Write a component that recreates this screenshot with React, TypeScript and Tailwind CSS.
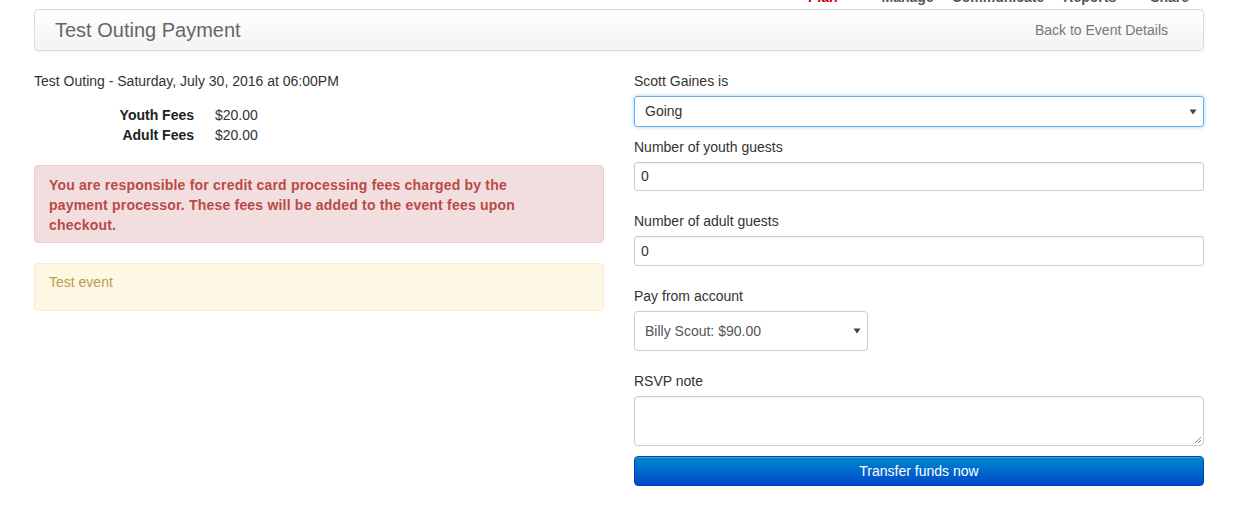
const navItems = [
  { label: "Plan", className: "text-[#cc0000] ml-[808px]" },
  { label: "Manage", className: "text-[#555] ml-[44px]" },
  { label: "Communicate", className: "text-[#555] ml-[18px]" },
  { label: "Reports", className: "text-[#555] ml-[19px]" },
  { label: "Share", className: "text-[#555] ml-[34px]" },
];

const Caret = () => (
  <svg width="8" height="6" viewBox="0 0 8 6" className="absolute right-[6px] top-1/2 -translate-y-1/2">
    <path d="M0.5 0.5 L7.5 0.5 L4 5.5 Z" fill="#444" />
  </svg>
);

const Label: React.FC<{ text: string }> = ({ text }) => (
  <div className="text-[14px] leading-[20px] text-[#333] mb-[5px]">{text}</div>
);

export default function App() {
  return (
    <div className="w-[1242px] h-[505px] bg-white overflow-hidden font-['Liberation_Sans',Arial,sans-serif] text-[#333]">
      {/* clipped top nav */}
      <div className="h-[5px] overflow-hidden">
        <div className="flex -mt-[10px] text-[14px] leading-[14px] font-bold">
          {navItems.map((n) => (
            <span key={n.label} className={n.className}>{n.label}</span>
          ))}
        </div>
      </div>

      <div className="w-[1170px] ml-[34px] pt-[4px]">
        {/* header panel */}
        <div className="h-[42px] border border-[#dcdcdc] rounded-[4px] bg-gradient-to-b from-white to-[#f3f3f3] shadow-[0_1px_2px_rgba(0,0,0,0.06)] flex items-center justify-between pl-[20px] pr-[35px]">
          <h1 className="text-[20px] text-[#666] leading-none">Test Outing Payment</h1>
          <span className="text-[14px] text-[#777]">Back to Event Details</span>
        </div>

        <div className="flex gap-[30px] pt-[20px]">
          {/* left */}
          <div className="w-[570px]">
            <div className="text-[14px] leading-[20px]">Test Outing - Saturday, July 30, 2016 at 06:00PM</div>
            <div className="mt-[14px] grid grid-cols-[160px_auto] gap-x-[21px] text-[14px] leading-[20px] w-fit">
              <span className="font-bold text-right text-[#222]">Youth Fees</span>
              <span>$20.00</span>
              <span className="font-bold text-right text-[#222]">Adult Fees</span>
              <span>$20.00</span>
            </div>
            <div className="mt-[20px] h-[78px] bg-[#f2dede] border border-[#ebccd1] rounded-[4px] pl-[14px] pt-[9px] text-[14px] leading-[20px] font-bold tracking-[0.2px] text-[#b94a48] pr-[60px]">
              You are responsible for credit card processing fees charged by the payment processor. These fees will be added to the event fees upon checkout.
            </div>
            <div className="mt-[20px] h-[48px] bg-[#fcf8e3] border border-[#faebcc] rounded-[4px] px-[14px] pt-[8px] text-[14px] leading-[20px] text-[#c09853]">
              Test event
            </div>
          </div>

          {/* right */}
          <div className="w-[570px] flex flex-col">
            <Label text="Scott Gaines is" />
            <div className="relative h-[31px] border border-[#66afe9] rounded-[3px] shadow-[0_0_4px_rgba(102,175,233,0.6)] flex items-center pl-[10px] text-[14px]">
              Going
              <Caret />
            </div>

            <div className="mt-[10px]"><Label text="Number of youth guests" /></div>
            <div className="h-[29px] border border-[#ccc] rounded-[3px] flex items-center pl-[6px] text-[14px] shadow-[inset_0_1px_1px_rgba(0,0,0,0.06)]">0</div>

            <div className="mt-[20px]"><Label text="Number of adult guests" /></div>
            <div className="h-[30px] border border-[#ccc] rounded-[3px] flex items-center pl-[6px] text-[14px] shadow-[inset_0_1px_1px_rgba(0,0,0,0.06)]">0</div>

            <div className="mt-[20px]"><Label text="Pay from account" /></div>
            <div className="relative w-[234px] h-[40px] border border-[#ccc] rounded-[4px] flex items-center pl-[10px] text-[14px] text-[#555]">
              Billy Scout: $90.00
              <Caret />
            </div>

            <div className="mt-[20px]"><Label text="RSVP note" /></div>
            <div className="relative h-[50px] border border-[#ccc] rounded-[4px] shadow-[inset_0_1px_1px_rgba(0,0,0,0.06)]">
              <svg width="8" height="8" viewBox="0 0 8 8" className="absolute right-[1px] bottom-[1px]">
                <path d="M7 1 L1 7 M7 4 L4 7" stroke="#888" strokeWidth="1" />
              </svg>
            </div>

            <button className="mt-[10px] h-[30px] rounded-[4px] border border-[#0044aa] bg-gradient-to-b from-[#0088cc] to-[#0044cc] text-white text-[14px] leading-none shadow-[inset_0_1px_0_rgba(255,255,255,0.2)]">
              Transfer funds now
            </button>
          </div>
        </div>
      </div>
    </div>
  );
}
